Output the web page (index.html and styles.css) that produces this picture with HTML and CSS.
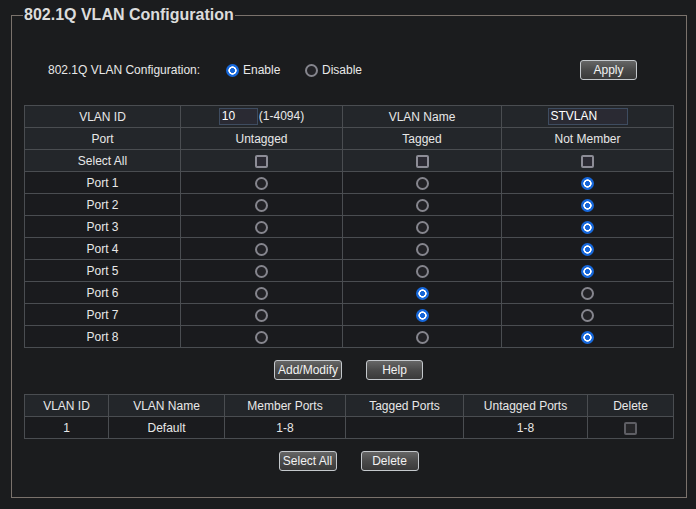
FILE: index.html
```html
<!DOCTYPE html>
<html>
<head>
<meta charset="utf-8">
<link rel="stylesheet" href="styles.css">
</head>
<body>
<fieldset class="frame">
  <legend class="title">802.1Q VLAN Configuration</legend>
  <div class="inner">
  <div class="cfg">
    <span class="cfg-label">802.1Q VLAN Configuration:</span>
    <label class="opt opt-enable"><span class="radio on"></span>Enable</label>
    <label class="opt opt-disable"><span class="radio"></span>Disable</label>
    <button class="btn btn-apply">Apply</button>
  </div>
  <table class="grid grid-main">
    <colgroup><col class="c1"><col class="c2"><col class="c3"><col class="c4"></colgroup>
    <tr class="hd"><td>VLAN ID</td><td><span class="inp inp-id">10</span>(1-4094)</td><td>VLAN Name</td><td><span class="inp inp-name">STVLAN</span></td></tr>
    <tr class="hd"><td>Port</td><td>Untagged</td><td>Tagged</td><td>Not Member</td></tr>
    <tr class="hd"><td>Select All</td><td><span class="chk"></span></td><td><span class="chk"></span></td><td><span class="chk"></span></td></tr>
    <tr><td>Port 1</td><td><span class="radio"></span></td><td><span class="radio"></span></td><td><span class="radio on"></span></td></tr>
    <tr><td>Port 2</td><td><span class="radio"></span></td><td><span class="radio"></span></td><td><span class="radio on"></span></td></tr>
    <tr><td>Port 3</td><td><span class="radio"></span></td><td><span class="radio"></span></td><td><span class="radio on"></span></td></tr>
    <tr><td>Port 4</td><td><span class="radio"></span></td><td><span class="radio"></span></td><td><span class="radio on"></span></td></tr>
    <tr><td>Port 5</td><td><span class="radio"></span></td><td><span class="radio"></span></td><td><span class="radio on"></span></td></tr>
    <tr><td>Port 6</td><td><span class="radio"></span></td><td><span class="radio on"></span></td><td><span class="radio"></span></td></tr>
    <tr><td>Port 7</td><td><span class="radio"></span></td><td><span class="radio on"></span></td><td><span class="radio"></span></td></tr>
    <tr><td>Port 8</td><td><span class="radio"></span></td><td><span class="radio"></span></td><td><span class="radio on"></span></td></tr>
  </table>
  <div class="btn-row row-mid">
    <button class="btn btn-add">Add/Modify</button>
    <button class="btn btn-help">Help</button>
  </div>
  <table class="grid grid-list">
    <colgroup><col class="d1"><col class="d2"><col class="d3"><col class="d4"><col class="d5"><col class="d6"></colgroup>
    <tr class="hd"><td>VLAN ID</td><td>VLAN Name</td><td>Member Ports</td><td>Tagged Ports</td><td>Untagged Ports</td><td>Delete</td></tr>
    <tr><td>1</td><td>Default</td><td>1-8</td><td></td><td>1-8</td><td><span class="chk dim"></span></td></tr>
  </table>
  <div class="btn-row row-bot">
    <button class="btn btn-sel">Select All</button>
    <button class="btn btn-del">Delete</button>
  </div>
  </div>
</fieldset>
</body>
</html>
```
FILE: styles.css
```css
html, body {
  margin: 0;
  padding: 0;
  background: #1b1c1e;
}
body {
  padding-top: 6px;
  font-family: "Liberation Sans", Arial, sans-serif;
  font-size: 12px;
  color: #e8e8e8;
}
.frame {
  margin: 0 0 0 11px;
  padding: 0;
  border: 1px solid #7a726c;
  box-sizing: border-box;
  width: 676px;
}
.title {
  margin-left: 11px;
  padding: 0 1px;
  font-size: 16px;
  font-weight: bold;
  line-height: 18px;
  color: #dcdcdc;
}
.inner {
  padding: 0 0 26px 12px;
}
.cfg {
  display: flex;
  align-items: center;
  height: 22px;
  margin-top: 35px;
  padding-left: 24px;
}
.cfg-label {
  width: 178px;
}
.opt {
  display: flex;
  align-items: center;
  gap: 4px;
}
.opt-enable {
  width: 79px;
}
.opt-disable {
  width: 275px;
}
.radio {
  display: inline-block;
  width: 13px;
  height: 13px;
  box-sizing: border-box;
  border-radius: 50%;
  border: 2px solid #85858d;
  background: #222226;
  vertical-align: middle;
}
.radio.on {
  border: none;
  background: radial-gradient(circle, #1565d8 0 2.2px, #ffffff 2.7px 3.9px, #1668dc 4.4px);
}
.chk {
  display: inline-block;
  width: 13px;
  height: 13px;
  box-sizing: border-box;
  border: 2px solid #8c8c96;
  border-radius: 2px;
  background: #2b2a33;
  vertical-align: middle;
}
.chk.dim {
  border-color: #5e5e64;
  background: #262629;
}
.btn {
  height: 20px;
  box-sizing: border-box;
  border: 1px solid #c4c8cc;
  border-radius: 3px;
  background: linear-gradient(#666666, #4a4a4a 50%, #3a3a3a);
  color: #f2f2f2;
  font-family: "Liberation Sans", Arial, sans-serif;
  font-size: 12px;
  padding: 0;
  line-height: 18px;
}
.btn-apply { width: 57px; }
.btn-add { width: 68px; }
.btn-help { width: 57px; }
.btn-sel { width: 58px; }
.btn-del { width: 58px; }
.grid {
  border-collapse: collapse;
  table-layout: fixed;
  width: 649px;
  margin-top: 24px;
}
.grid td {
  border: 1px solid #4a4d51;
  height: 21px;
  padding: 0;
  text-align: center;
  vertical-align: middle;
  line-height: 14px;
}
.grid tr { background: #1a1b1e; }
.grid tr.hd { background: #23262a; }
.c1 { width: 156px; }
.c2 { width: 162px; }
.c3 { width: 159px; }
.c4 { width: 172px; }
.d1 { width: 84px; }
.d2 { width: 116px; }
.d3 { width: 121px; }
.d4 { width: 118px; }
.d5 { width: 124px; }
.d6 { width: 86px; }
.inp {
  display: inline-block;
  height: 17px;
  box-sizing: border-box;
  border: 1px solid #3e4c60;
  background: #2a2a33;
  color: #ffffff;
  text-align: left;
  line-height: 15px;
  padding-left: 2px;
  vertical-align: middle;
}
.inp-id { width: 39px; margin-right: 1px; }
.inp-name { width: 80px; }
.btn-row {
  display: flex;
  justify-content: center;
  gap: 24px;
  width: 649px;
}
.row-mid { margin-top: 12px; }
.grid-list { margin-top: 14px; }
.row-bot { margin-top: 12px; }
```
